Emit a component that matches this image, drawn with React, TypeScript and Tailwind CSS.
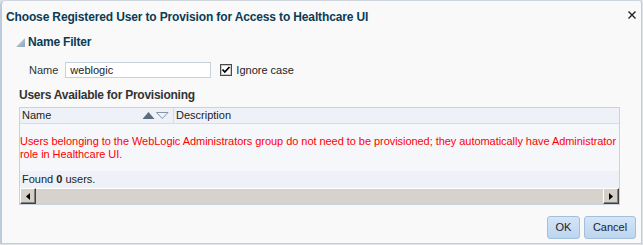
import React from "react";

const font = { fontFamily: '"Liberation Sans", Arial, sans-serif' };

const SortIcons = () => (
  <svg width="27" height="9" viewBox="0 0 27 9">
    <polygon points="0.5,8 6.5,1 12.5,8" fill="#5d6d80" />
    <polygon points="14.5,1.5 26,1.5 20.25,7.5" fill="none" stroke="#8595a8" strokeWidth="1" />
  </svg>
);

const ScrollButton = ({ dir }: { dir: "left" | "right" }) => (
  <div className="flex h-full w-[16px] items-center justify-center border border-t-white border-l-white border-r-[#404040] border-b-[#404040] bg-[#d4d0c8] shadow-[inset_-1px_-1px_0_#808080]">
    <svg width="4" height="7" viewBox="0 0 4 7">
      {dir === "left" ? (
        <polygon points="4,0 0,3.5 4,7" fill="#000" />
      ) : (
        <polygon points="0,0 4,3.5 0,7" fill="#000" />
      )}
    </svg>
  </div>
);

export default function App() {
  return (
    <div className="h-[245px] w-[643px] bg-[#dfe3e8]" style={font}>
      <div className="h-[244px] w-[642px] rounded-tl-[5px] rounded-tr-[3px] border-l-[2px] border-t border-r border-b border-l-[#bccbdc] border-t-[#d0d6dd] border-r-[#c7ccd2] border-b-[#c7ccd2] bg-[#f9f9f9]">
        {/* title bar */}
        <div className="flex h-[31px] items-center justify-between pl-[4px] pr-[5px]">
          <span className="text-[12px] font-bold tracking-[-0.14px] text-[#0b3b56]">
            Choose Registered User to Provision for Access to Healthcare UI
          </span>
          <svg width="8" height="8" viewBox="0 0 8 8" className="mt-[-3px]">
            <path d="M0.5 0.5 L7.5 7.5 M7.5 0.5 L0.5 7.5" stroke="#222" strokeWidth="1.4" />
          </svg>
        </div>

        {/* name filter header */}
        <div className="mt-[3px] flex h-[14px] items-center pl-[14px]">
          <svg width="9" height="9" viewBox="0 0 9 9">
            <defs>
              <linearGradient id="tri" x1="0" y1="0" x2="1" y2="1">
                <stop offset="0" stopColor="#c9d5e2" />
                <stop offset="1" stopColor="#8ea3ba" />
              </linearGradient>
            </defs>
            <polygon points="9,0 9,9 0,9" fill="url(#tri)" />
          </svg>
          <span className="ml-[3px] text-[12px] font-bold tracking-[-0.2px] text-[#0b3b56]">Name Filter</span>
        </div>

        {/* name row */}
        <div className="mt-[13px] flex h-[16px] items-center pl-[27px]">
          <span className="text-[11px] text-[#333]">Name</span>
          <div className="ml-[7px] flex h-[16px] w-[146px] items-center border border-[#c6d1dc] bg-white pl-[4px] text-[11px] text-[#222]">
            weblogic
          </div>
          <svg width="12" height="12" viewBox="0 0 12 12" className="ml-[9px]">
            <rect x="0.5" y="0.5" width="11" height="11" fill="#fff" stroke="#4b4b4b" />
            <rect x="1.5" y="1.5" width="9" height="9" fill="none" stroke="#c9c9c9" />
            <path d="M2.5 5.5 L4.8 8 L9.5 3" fill="none" stroke="#000" strokeWidth="1.8" />
          </svg>
          <span className="ml-[4px] text-[11px] text-[#222]">Ignore case</span>
        </div>

        {/* users available */}
        <div className="mt-[10px] flex h-[14px] items-center pl-[17px] text-[12px] font-bold tracking-[-0.25px] text-[#333]">
          Users Available for Provisioning
        </div>

        {/* table */}
        <div className="ml-[17px] mt-[5px] w-[601px] border border-[#c9d3dd] bg-[#f5f7fb]">
          <div className="flex h-[16px] items-center border-b border-[#d5dde6] bg-[#eef2f8] text-[11px] text-[#222]">
            <div className="flex h-full w-[154px] items-center justify-between border-r border-[#d5dde6] pl-[2px] pr-[4px]">
              <span>Name</span>
              <SortIcons />
            </div>
            <span className="pl-[2px]">Description</span>
          </div>
          <div className="whitespace-nowrap pb-[10px] pt-[11px] text-[11px] leading-[13px] tracking-[-0.05px] text-[#ff0000]">
            Users belonging to the WebLogic Administrators group do not need to be provisioned; they automatically have Administrator
            <br />
            role in Healthcare UI.
          </div>
          <div className="flex h-[16px] items-center bg-[#eef2f8] pl-[2px] text-[11px] text-[#222]">
            Found&nbsp;<b>0</b>&nbsp;users.
          </div>
          <div className="flex h-[17px] border-t border-[#f2f2f2] bg-[#d6d3cc]">
            <ScrollButton dir="left" />
            <div className="flex-1 border-t border-white" />
            <ScrollButton dir="right" />
          </div>
        </div>

        {/* buttons */}
        <div className="mt-[11px] flex justify-end gap-[4px] pr-[5px]">
          <button className="h-[23px] w-[33px] rounded-[3px] border border-[#a3bfdc] bg-gradient-to-b from-[#d4e5f7] to-[#bcd5ef] text-[11px] text-[#222]">
            OK
          </button>
          <button className="h-[23px] w-[52px] rounded-[3px] border border-[#a3bfdc] bg-gradient-to-b from-[#d4e5f7] to-[#bcd5ef] text-[11px] text-[#222]">
            Cancel
          </button>
        </div>
      </div>
    </div>
  );
}
